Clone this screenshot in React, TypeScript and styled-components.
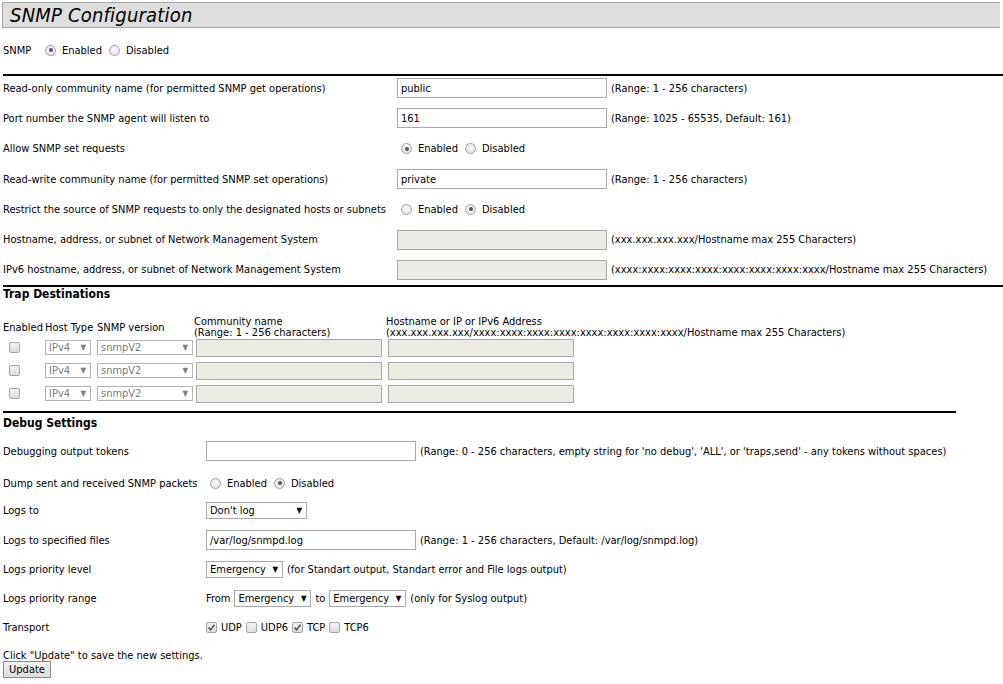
import React from "react";
import styled, { createGlobalStyle, css } from "styled-components";

const Global = createGlobalStyle`
  html, body { margin: 0; padding: 0; background: #fff; }
  body {
    font-family: "DejaVu Sans Condensed", "DejaVu Sans", sans-serif;
    font-stretch: condensed;
    font-size: 11px;
    color: #000;
  }
`;

const Page = styled.div`
  padding: 2px 0 0 3px;
  width: 1000px;
  box-sizing: border-box;
`;

const TitleBar = styled.div`
  height: 24px;
  margin-left: -1px;
  border: 1px solid #a8a8a8;
  border-right: none;
  background: #dedede;
  display: flex;
  align-items: center;
  padding-left: 7px;
  font-size: 20px;
  font-style: italic;
  letter-spacing: 0.2px;
`;

const SnmpRow = styled.div`
  display: flex;
  align-items: center;
  height: 20px;
  margin-top: 12px;
`;

const SnmpLabel = styled.span`
  width: 38px;
`;

const Rule = styled.div<{ $w?: string; $mt?: number }>`
  height: 2px;
  background: #000;
  width: ${(p) => p.$w || "1000px"};
  margin-top: ${(p) => p.$mt || 0}px;
`;

const FormGrid = styled.div`
  display: grid;
  grid-template-columns: 394px 1fr;
  grid-auto-rows: 30.3px;
  align-items: center;
  margin-top: -3px;
`;

const Label = styled.div`
  white-space: nowrap;
`;

const Cell = styled.div`
  display: flex;
  align-items: center;
  white-space: nowrap;
  gap: 4px;
`;

const TextInput = styled.div<{ $w: number; $disabled?: boolean; $h?: number }>`
  width: ${(p) => p.$w}px;
  height: ${(p) => p.$h || 20}px;
  box-sizing: border-box;
  border: 1px solid #a9a9a9;
  background: ${(p) => (p.$disabled ? "#ebebe4" : "#fff")};
  display: flex;
  align-items: center;
  padding-left: 3px;
  flex-shrink: 0;
`;

const Hint = styled.span`
  color: #000;
`;

const RadioGroup = styled.div`
  display: flex;
  align-items: center;
`;

const RadioDot = styled.span<{ $on?: boolean }>`
  width: 11px;
  height: 11px;
  border-radius: 50%;
  box-sizing: border-box;
  border: 1px solid #a0a0a0;
  background: radial-gradient(circle at 50% 40%, #fbfbfb, #dcdcdc);
  margin: 0 6px 0 4px;
  position: relative;
  flex-shrink: 0;
  ${(p) =>
    p.$on &&
    css`
      &::after {
        content: "";
        position: absolute;
        left: 2.5px;
        top: 2.5px;
        width: 4px;
        height: 4px;
        border-radius: 50%;
        background: #555;
      }
    `}
`;

const RadioText = styled.span`
  margin-right: 3px;
`;

const Radio = ({ on, label }: { on?: boolean; label: string }) => (
  <>
    <RadioDot $on={on} />
    <RadioText>{label}</RadioText>
  </>
);

const CheckBox = styled.span`
  width: 11px;
  height: 11px;
  box-sizing: border-box;
  border: 1px solid #a5a5a5;
  border-radius: 2px;
  background: linear-gradient(#f3f3f3, #dcdcdc);
  display: inline-flex;
  align-items: center;
  justify-content: center;
  flex-shrink: 0;
`;

const Check = ({ on }: { on?: boolean }) => (
  <CheckBox>
    {on && (
      <svg width="9" height="9" viewBox="0 0 9 9">
        <path d="M1.5 4.5 L3.5 6.8 L7.6 1.8" stroke="#555" strokeWidth="1.6" fill="none" />
      </svg>
    )}
  </CheckBox>
);

const SelectBox = styled.div<{ $w: number; $disabled?: boolean; $h?: number }>`
  width: ${(p) => p.$w}px;
  height: ${(p) => p.$h || 17}px;
  box-sizing: border-box;
  border: 1px solid ${(p) => (p.$disabled ? "#b4b4b4" : "#a9a9a9")};
  background: #fff;
  color: ${(p) => (p.$disabled ? "#7a7a7a" : "#000")};
  display: flex;
  align-items: center;
  justify-content: space-between;
  padding: 0 4px 0 3px;
  flex-shrink: 0;
`;

const Arrow = styled.span<{ $disabled?: boolean }>`
  font-size: 8px;
  color: ${(p) => (p.$disabled ? "#808080" : "#000")};
`;

const Select = ({ w, value, disabled, h }: { w: number; value: string; disabled?: boolean; h?: number }) => (
  <SelectBox $w={w} $disabled={disabled} $h={h}>
    <span>{value}</span>
    <Arrow $disabled={disabled}>▼</Arrow>
  </SelectBox>
);

const SectionTitle = styled.div<{ $mt: number }>`
  font-weight: bold;
  font-size: 12px;
  line-height: 15px;
  margin-top: ${(p) => p.$mt}px;
`;

const TrapHead = styled.div`
  display: grid;
  grid-template-columns: 42px 52px 97px 192px 400px;
  align-items: center;
  line-height: 11px;
  height: 22px;
  margin-top: 14px;
`;

const HeadCell = styled.div`
  white-space: nowrap;
`;

const TrapGrid = styled.div`
  display: grid;
  grid-template-columns: 42px 52px 97px 192px 200px;
  grid-auto-rows: 23px;
  align-items: center;
  margin-top: -2px;
`;

const TrapCell = styled.div<{ $pad?: number }>`
  display: flex;
  align-items: center;
  padding-left: ${(p) => p.$pad || 0}px;
`;

const DebugWrap = styled.div`
  display: grid;
  grid-template-columns: 203px 1fr;
  margin-top: 5px;
`;

const DRow = styled.div<{ $h: number }>`
  display: contents;
  & > * {
    height: ${(p) => p.$h}px;
    display: flex;
    align-items: center;
  }
`;

const Footer = styled.div`
  margin-top: 13px;
  line-height: 13px;
`;

const Button = styled.div`
  margin-top: -1px;
  width: 48px;
  height: 17px;
  box-sizing: border-box;
  border: 1px solid #8a8a8a;
  background: linear-gradient(#f4f4f4, #dedede);
  display: flex;
  align-items: center;
  justify-content: center;
`;

export default function App() {
  return (
    <>
      <Global />
      <Page>
        <TitleBar>SNMP Configuration</TitleBar>
        <SnmpRow>
          <SnmpLabel>SNMP</SnmpLabel>
          <RadioGroup>
            <Radio on label="Enabled" />
            <Radio label="Disabled" />
          </RadioGroup>
        </SnmpRow>
        <Rule $mt={14} />
        <FormGrid>
          <Label>Read-only community name (for permitted SNMP get operations)</Label>
          <Cell>
            <TextInput $w={210}>public</TextInput>
            <Hint>(Range: 1 - 256 characters)</Hint>
          </Cell>
          <Label>Port number the SNMP agent will listen to</Label>
          <Cell>
            <TextInput $w={210}>161</TextInput>
            <Hint>(Range: 1025 - 65535, Default: 161)</Hint>
          </Cell>
          <Label>Allow SNMP set requests</Label>
          <Cell>
            <RadioGroup>
              <Radio on label="Enabled" />
              <Radio label="Disabled" />
            </RadioGroup>
          </Cell>
          <Label>Read-write community name (for permitted SNMP set operations)</Label>
          <Cell>
            <TextInput $w={210}>private</TextInput>
            <Hint>(Range: 1 - 256 characters)</Hint>
          </Cell>
          <Label>Restrict the source of SNMP requests to only the designated hosts or subnets</Label>
          <Cell>
            <RadioGroup>
              <Radio label="Enabled" />
              <Radio on label="Disabled" />
            </RadioGroup>
          </Cell>
          <Label>Hostname, address, or subnet of Network Management System</Label>
          <Cell>
            <TextInput $w={210} $disabled />
            <Hint>(xxx.xxx.xxx.xxx/Hostname max 255 Characters)</Hint>
          </Cell>
          <Label>IPv6 hostname, address, or subnet of Network Management System</Label>
          <Cell>
            <TextInput $w={210} $disabled />
            <Hint>(xxxx:xxxx:xxxx:xxxx:xxxx:xxxx:xxxx:xxxx/Hostname max 255 Characters)</Hint>
          </Cell>
        </FormGrid>
        <Rule />
        <SectionTitle $mt={0}>Trap Destinations</SectionTitle>
        <TrapHead>
          <HeadCell>Enabled</HeadCell>
          <HeadCell>Host Type</HeadCell>
          <HeadCell>SNMP version</HeadCell>
          <HeadCell>
            Community name
            <br />
            (Range: 1 - 256 characters)
          </HeadCell>
          <HeadCell>
            Hostname or IP or IPv6 Address
            <br />
            (xxx.xxx.xxx.xxx/xxxx:xxxx:xxxx:xxxx:xxxx:xxxx:xxxx:xxxx/Hostname max 255 Characters)
          </HeadCell>
        </TrapHead>
        <TrapGrid>
          {[0, 1, 2].map((i) => (
            <React.Fragment key={i}>
              <TrapCell $pad={6}>
                <Check />
              </TrapCell>
              <TrapCell>
                <Select w={46} value="IPv4" disabled h={15} />
              </TrapCell>
              <TrapCell>
                <Select w={96} value="snmpV2" disabled h={15} />
              </TrapCell>
              <TrapCell $pad={2}>
                <TextInput $w={186} $h={18} $disabled />
              </TrapCell>
              <TrapCell $pad={2}>
                <TextInput $w={186} $h={18} $disabled />
              </TrapCell>
            </React.Fragment>
          ))}
        </TrapGrid>
        <Rule $w="953px" $mt={6} />
        <SectionTitle $mt={3}>Debug Settings</SectionTitle>
        <DebugWrap>
          <DRow $h={30}>
            <Label>Debugging output tokens</Label>
            <Cell>
              <TextInput $w={210} />
              <Hint>(Range: 0 - 256 characters, empty string for 'no debug', 'ALL', or 'traps,send' - any tokens without spaces)</Hint>
            </Cell>
          </DRow>
          <DRow $h={34}>
            <Label>Dump sent and received SNMP packets</Label>
            <Cell>
              <RadioGroup>
                <Radio label="Enabled" />
                <Radio on label="Disabled" />
              </RadioGroup>
            </Cell>
          </DRow>
          <DRow $h={20}>
            <Label>Logs to</Label>
            <Cell>
              <Select w={101} value="Don't log" />
            </Cell>
          </DRow>
          <DRow $h={40}>
            <Label>Logs to specified files</Label>
            <Cell>
              <TextInput $w={210}>/var/log/snmpd.log</TextInput>
              <Hint>(Range: 1 - 256 characters, Default: /var/log/snmpd.log)</Hint>
            </Cell>
          </DRow>
          <DRow $h={18}>
            <Label>Logs priority level</Label>
            <Cell>
              <Select w={77} value="Emergency" />
              <Hint>(for Standart output, Standart error and File logs output)</Hint>
            </Cell>
          </DRow>
          <DRow $h={40}>
            <Label>Logs priority range</Label>
            <Cell>
              <span>From</span>
              <Select w={77} value="Emergency" />
              <span>to</span>
              <Select w={77} value="Emergency" />
              <Hint>(only for Syslog output)</Hint>
            </Cell>
          </DRow>
          <DRow $h={18}>
            <Label>Transport</Label>
            <Cell>
              <Check on /> UDP <Check /> UDP6 <Check on /> TCP <Check /> TCP6
            </Cell>
          </DRow>
        </DebugWrap>
        <Footer>
          Click "Update" to save the new settings.
          <Button>Update</Button>
        </Footer>
      </Page>
    </>
  );
}
